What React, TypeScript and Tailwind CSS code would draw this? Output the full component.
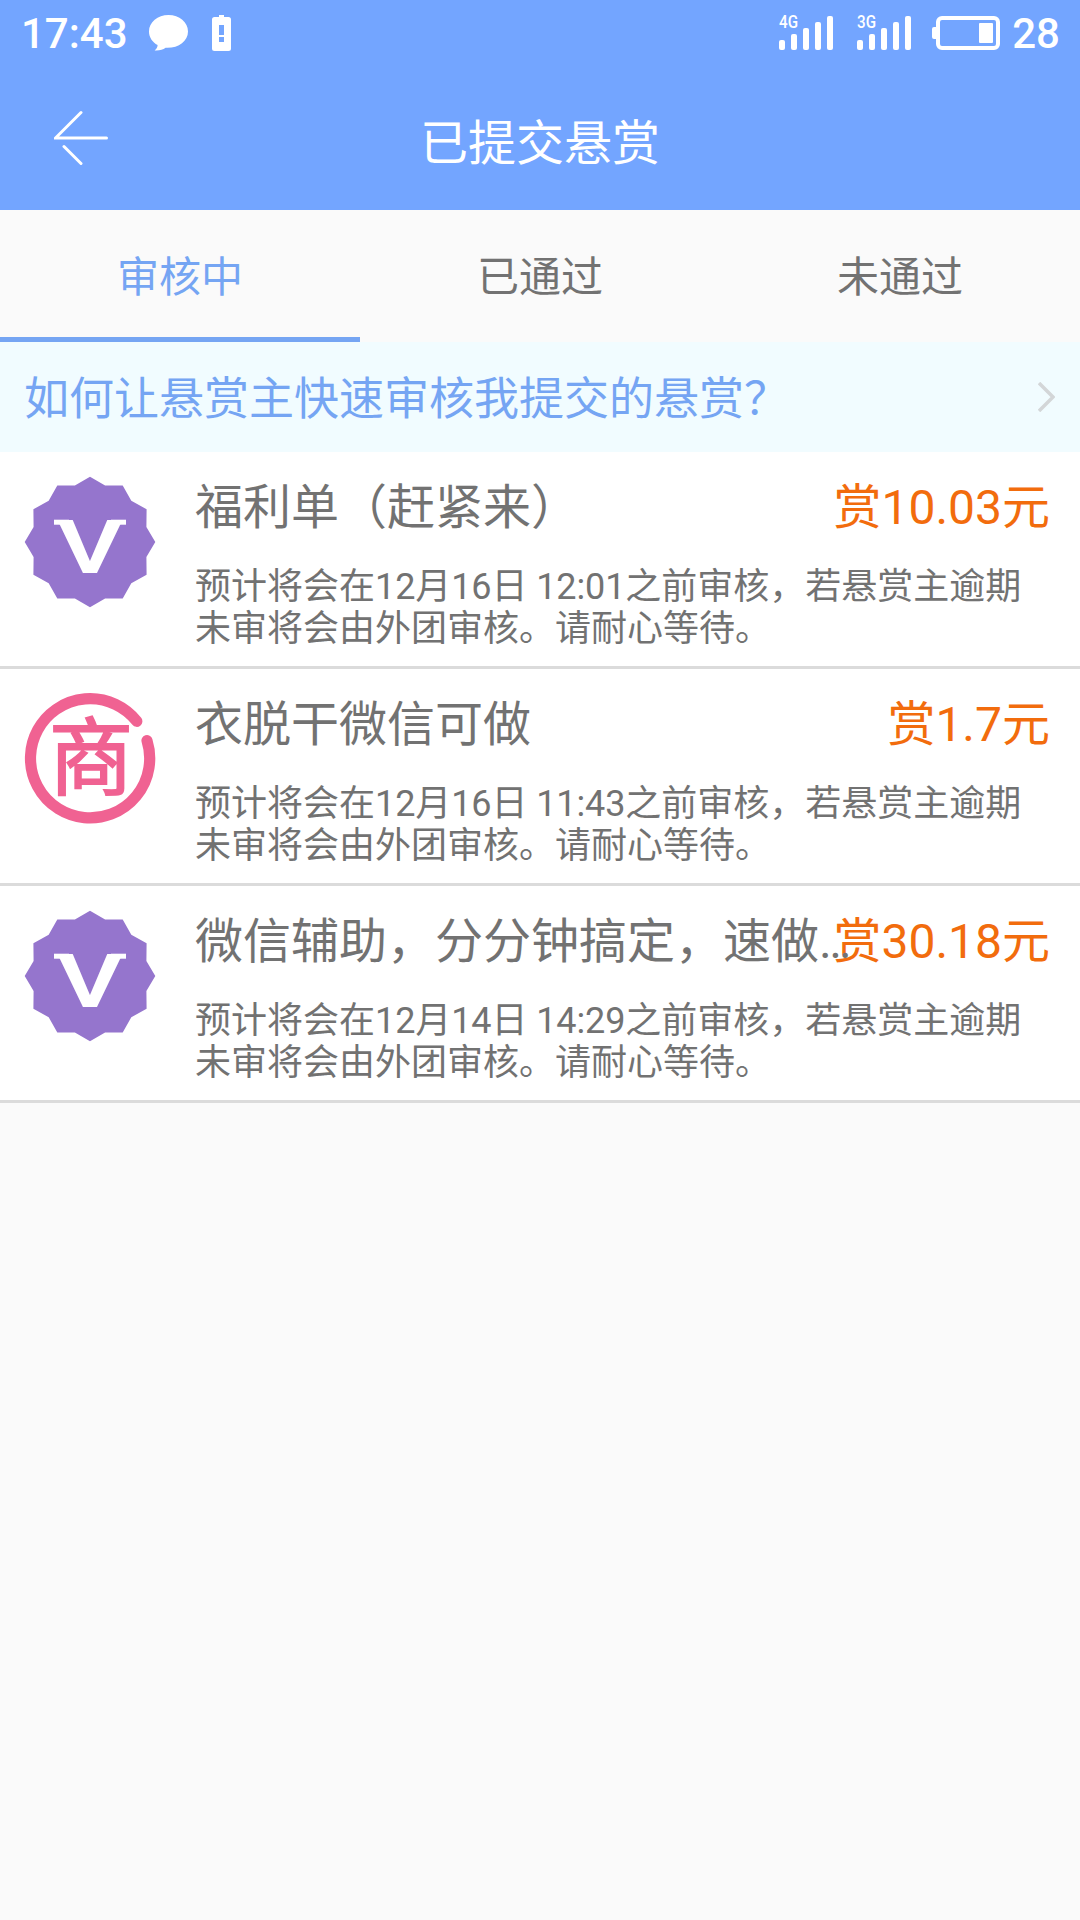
import clsx from "clsx";

const tabs = ["审核中", "已通过", "未通过"];

const tasks = [
  { id: 1, icon: "vip", title: "福利单（赶紧来）", reward: "赏10.03元", deadline: "12月16日 12:01" },
  { id: 2, icon: "shop", title: "衣脱干微信可做", reward: "赏1.7元", deadline: "12月16日 11:43" },
  { id: 3, icon: "vip", title: "微信辅助，分分钟搞定，速做…", reward: "赏30.18元", deadline: "12月14日 14:29" },
];

function Signal({ label }: { label: string }) {
  return (
    <svg className="h-9 w-[54px] overflow-visible" viewBox="0 0 54 36" fill="#fff">
      <text x="0" y="14" fontSize="17.5" fontWeight="500" textLength="19" lengthAdjust="spacingAndGlyphs">
        {label}
      </text>
      <rect x="0" y="26" width="6" height="10" rx="2" />
      <rect x="12" y="20" width="6" height="16" rx="2" />
      <rect x="24" y="14" width="6" height="22" rx="2" />
      <rect x="36" y="8" width="6" height="28" rx="2" />
      <rect x="48" y="2" width="6" height="34" rx="2" />
    </svg>
  );
}

function StatusBar() {
  return (
    <div className="flex h-[66px] items-center pl-[21px] pr-5 text-[42px] font-medium leading-none">
      <span className="w-[106px] pt-px">17:43</span>
      <svg className="ml-[22px] h-9 w-[39px]" viewBox="0 0 39 36" fill="#fff">
        <path d="M19.5 0C8.7 0 0 7.2 0 16.5c0 5.8 3.4 10.8 8.6 13.6 0 2-1.1 4-3 5.4 4.5.4 8.3-.8 11-2.7C29 33.5 39 26.5 39 16.5 39 7.2 30.3 0 19.5 0Z" />
      </svg>
      <svg className="ml-6 h-9 w-[19px]" viewBox="0 0 19 36">
        <path fill="#fff" d="M7 0h5v2h4.5Q19 2 19 4.5v29q0 2.5-2.5 2.5h-14Q0 36 0 33.5v-29Q0 2 2.5 2H7Z" />
        <path fill="#73a5ff" d="M7 10h5v10H7zM7 22h5v5H7z" />
      </svg>
      <div className="ml-auto flex items-center">
        <div className="flex pb-0.5">
          <Signal label="4G" />
          <div className="w-6" />
          <Signal label="3G" />
          <svg className="ml-[21px] h-9 w-[68px]" viewBox="0 0 68 36">
            <rect x="6" y="4" width="60" height="30" rx="4" fill="none" stroke="#fff" strokeWidth="4" />
            <path fill="#fff" d="M4 13H2q-2 0-2 2v8q0 2 2 2h2zM48 9h12q1 0 1 1v18q0 1-1 1H48q-1 0-1-1V10q0-1 1-1z" />
          </svg>
        </div>
        <span className="ml-3 pt-px">28</span>
      </div>
    </div>
  );
}

function VipIcon() {
  return (
    <svg className="size-[132px] shrink-0 overflow-visible" viewBox="0 0 132 132">
      <polygon
        fill="#9575cd"
        points="66,0.7 81.1,9.6 98.7,9.4 107.3,24.7 122.6,33.3 122.4,50.9 131.3,66 122.4,81.1 122.6,98.7 107.3,107.3 98.7,122.6 81.1,122.4 66,131.3 50.9,122.4 33.3,122.6 24.7,107.3 9.4,98.7 9.6,81.1 0.7,66 9.6,50.9 9.4,33.3 24.7,24.7 33.3,9.4 50.9,9.6"
      />
      <text
        x="33"
        y="97"
        fill="#fff"
        fontSize="75"
        textLength="66"
        lengthAdjust="spacingAndGlyphs"
        className="font-[Roboto] font-semibold"
      >
        V
      </text>
      <rect x="30" y="43.7" width="15" height="5" fill="#fff" />
      <rect x="87" y="43.7" width="15" height="5" fill="#fff" />
    </svg>
  );
}

function ShopIcon() {
  return (
    <svg className="size-[132px] shrink-0 overflow-visible" viewBox="0 0 132 132">
      <path
        d="M112.8 28.3A59.6 59.6 0 1 0 123 47.6"
        fill="none"
        stroke="#f06292"
        strokeWidth="11.2"
        strokeLinecap="round"
      />
      <text
        x="25"
        y="95"
        fill="#f06292"
        stroke="#f06292"
        strokeWidth="2"
        fontSize="84"
        className="font-['Noto_Sans_CJK_SC']"
      >
        商
      </text>
    </svg>
  );
}

export default function App() {
  return (
    <div className="flex h-[1920px] w-[1080px] flex-col overflow-hidden bg-[#fafafa] font-[Roboto,'Noto_Sans_CJK_SC',sans-serif] text-[#727272]">
      <header className="h-[210px] bg-[#73a5ff] text-white">
        <StatusBar />
        <div className="grid h-36 grid-cols-[160px_1fr_160px] items-center">
          <svg className="ml-[54px] h-14 w-14" viewBox="0 0 56 56" fill="none" stroke="#fff" strokeWidth="3" strokeLinecap="round">
            <path d="M27 2.5 1.5 28H52.5M10 36.5 27 53.5" />
          </svg>
          <h1 className="pt-3 text-center text-[48px] leading-none">已提交悬赏</h1>
        </div>
      </header>

      <nav className="grid h-[132px] grid-cols-3">
        {tabs.map((tab, i) => (
          <button
            key={tab}
            className={clsx(
              "border-b-[5px] pt-2 text-[42px] leading-none",
              i === 0 ? "border-[#75a5f3] text-[#75a5f3]" : "border-transparent",
            )}
          >
            {tab}
          </button>
        ))}
      </nav>

      <a className="flex h-[110px] items-center justify-between bg-[#f1fcff] pl-6 pr-[25px] text-[45px] leading-none text-[#75a5f3]">
        <span className="pt-[5px]">如何让悬赏主快速审核我提交的悬赏？</span>
        <svg className="h-[30px] w-[17px]" viewBox="0 0 17 30" fill="none" stroke="#d3d6d8" strokeWidth="3.5">
          <path d="m1 1 14 14L1 29" />
        </svg>
      </a>

      <main>
        {tasks.map((task) => (
          <section key={task.id} className="flex h-[217px] border-b-[3px] border-[#dbdbdb] bg-white pl-6 pr-[30px] pt-6">
            {task.icon === "vip" ? <VipIcon /> : <ShopIcon />}
            <div className="ml-[39px] flex-1 pt-0.5">
              <div className="flex h-[60px] justify-between whitespace-nowrap text-[48px] leading-[60px]">
                <h2 className="relative z-10 w-0">{task.title}</h2>
                <span className="text-[#f26c0d]">{task.reward}</span>
              </div>
              <p className="mt-7 text-[36px] leading-[42px]">
                预计将会在<span className="tracking-[-0.1px]">{task.deadline}</span>之前审核，若悬赏主逾期
                <br />
                未审将会由外团审核。请耐心等待。
              </p>
            </div>
          </section>
        ))}
      </main>
    </div>
  );
}
